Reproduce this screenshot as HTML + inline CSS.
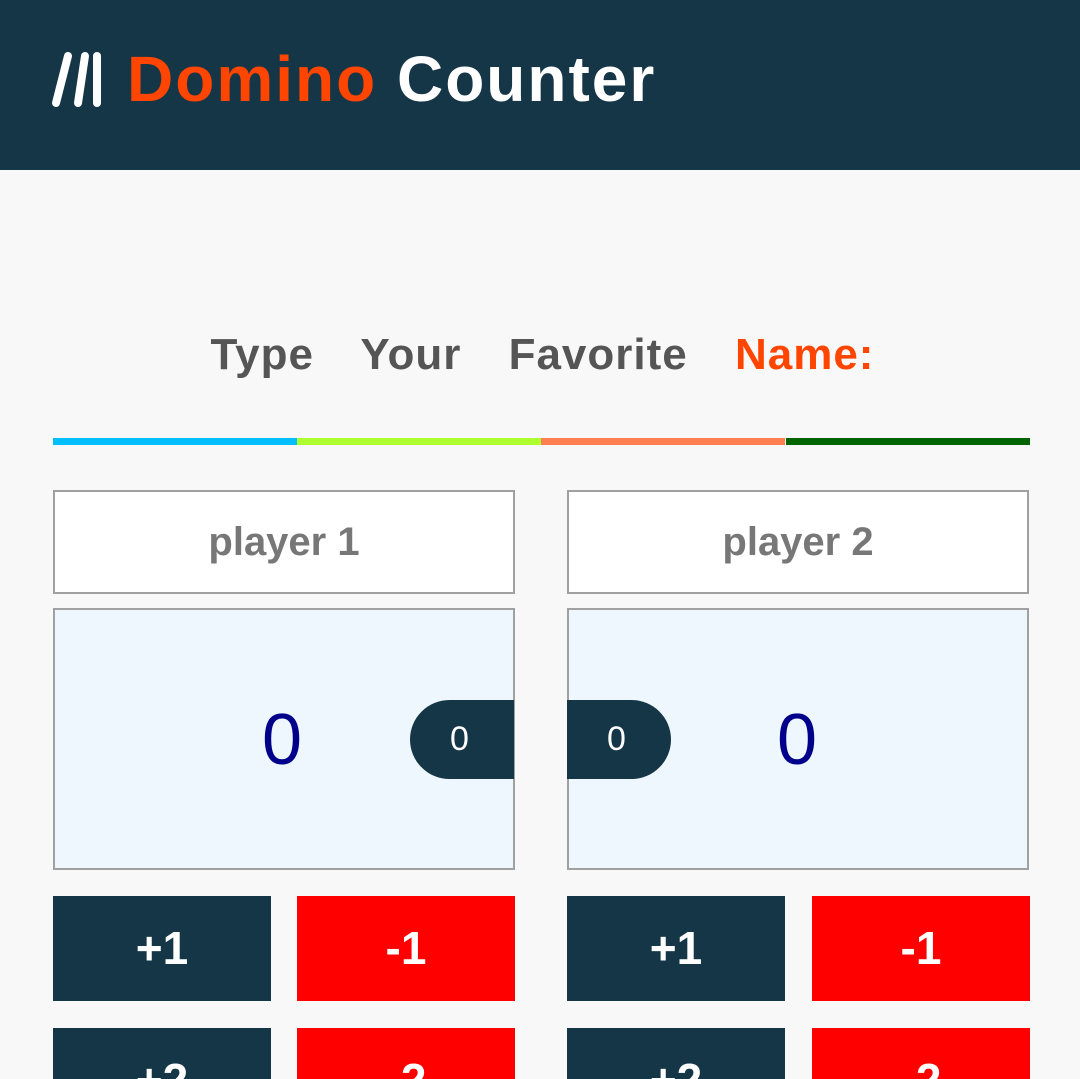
<!DOCTYPE html><html><head><style>
html,body{margin:0;width:1080px;height:1079px;overflow:hidden}
body{background:#f8f8f8;font-family:"Liberation Sans",sans-serif;position:relative}
.hd{position:absolute;left:0;top:0;width:1080px;height:170px;background:#153646}
.logo{position:absolute;left:127px;top:42px;font-size:64px;font-weight:bold;color:#fff;letter-spacing:2px}
.logo span{color:#ff4500}
.t{position:absolute;top:330px;left:0;width:1085px;text-align:center;font-size:44px;font-weight:bold;color:#555;word-spacing:34px;letter-spacing:1px}
.t span{color:#ff4500}
.s{position:absolute;top:438px;height:7px;width:244px}
.in{position:absolute;top:490px;width:462px;height:104px;border:2px solid #a0a0a0;background:#fff;box-sizing:border-box;text-align:center;line-height:100px;font-size:40px;font-weight:bold;color:#777}
.sc{position:absolute;top:608px;width:462px;height:262px;border:2px solid #a0a0a0;background:#eff7fe;box-sizing:border-box}
.n{position:absolute;top:700px;font-size:72px;color:#00008b;line-height:80px}
.pill{position:absolute;top:700px;width:104px;height:79px;background:#153646;color:#fff;font-size:34px;line-height:79px}
.b{position:absolute;width:218px;height:105px;color:#fff;font-weight:bold;font-size:46px;text-align:center;line-height:105px}
.d{background:#153646}.r{background:#ff0000}
</style></head><body>
<div class="hd">
<svg style="position:absolute;left:50px;top:50px" width="55" height="60"><g stroke="#fff" stroke-width="8" stroke-linecap="round"><line x1="18" y1="6" x2="6" y2="53"/><line x1="35" y1="6" x2="28" y2="53"/><line x1="47" y1="6" x2="47" y2="53"/></g></svg>
<div class="logo"><span>Domino</span> Counter</div></div>
<div class="t">Type Your Favorite <span>Name:</span></div>
<div class="s" style="left:53px;background:#00bfff"></div>
<div class="s" style="left:297px;background:#adff2f"></div>
<div class="s" style="left:541px;background:#ff7f50"></div>
<div class="s" style="left:786px;width:244px;background:#006400"></div>
<div class="in" style="left:53px">player 1</div>
<div class="in" style="left:567px">player 2</div>
<div class="sc" style="left:53px"></div>
<div class="sc" style="left:567px"></div>
<div class="n" style="left:262px">0</div>
<div class="n" style="left:777px">0</div>
<div class="pill" style="left:410px;border-radius:40px 0 0 40px;text-indent:40px">0</div>
<div class="pill" style="left:567px;border-radius:0 40px 40px 0;text-indent:40px">0</div>
<div class="b d" style="left:53px;top:896px">+1</div>
<div class="b r" style="left:297px;top:896px">-1</div>
<div class="b d" style="left:567px;top:896px">+1</div>
<div class="b r" style="left:812px;top:896px">-1</div>
<div class="b d" style="left:53px;top:1028px">+2</div>
<div class="b r" style="left:297px;top:1028px">-2</div>
<div class="b d" style="left:567px;top:1028px">+2</div>
<div class="b r" style="left:812px;top:1028px">-2</div>
</body></html>
